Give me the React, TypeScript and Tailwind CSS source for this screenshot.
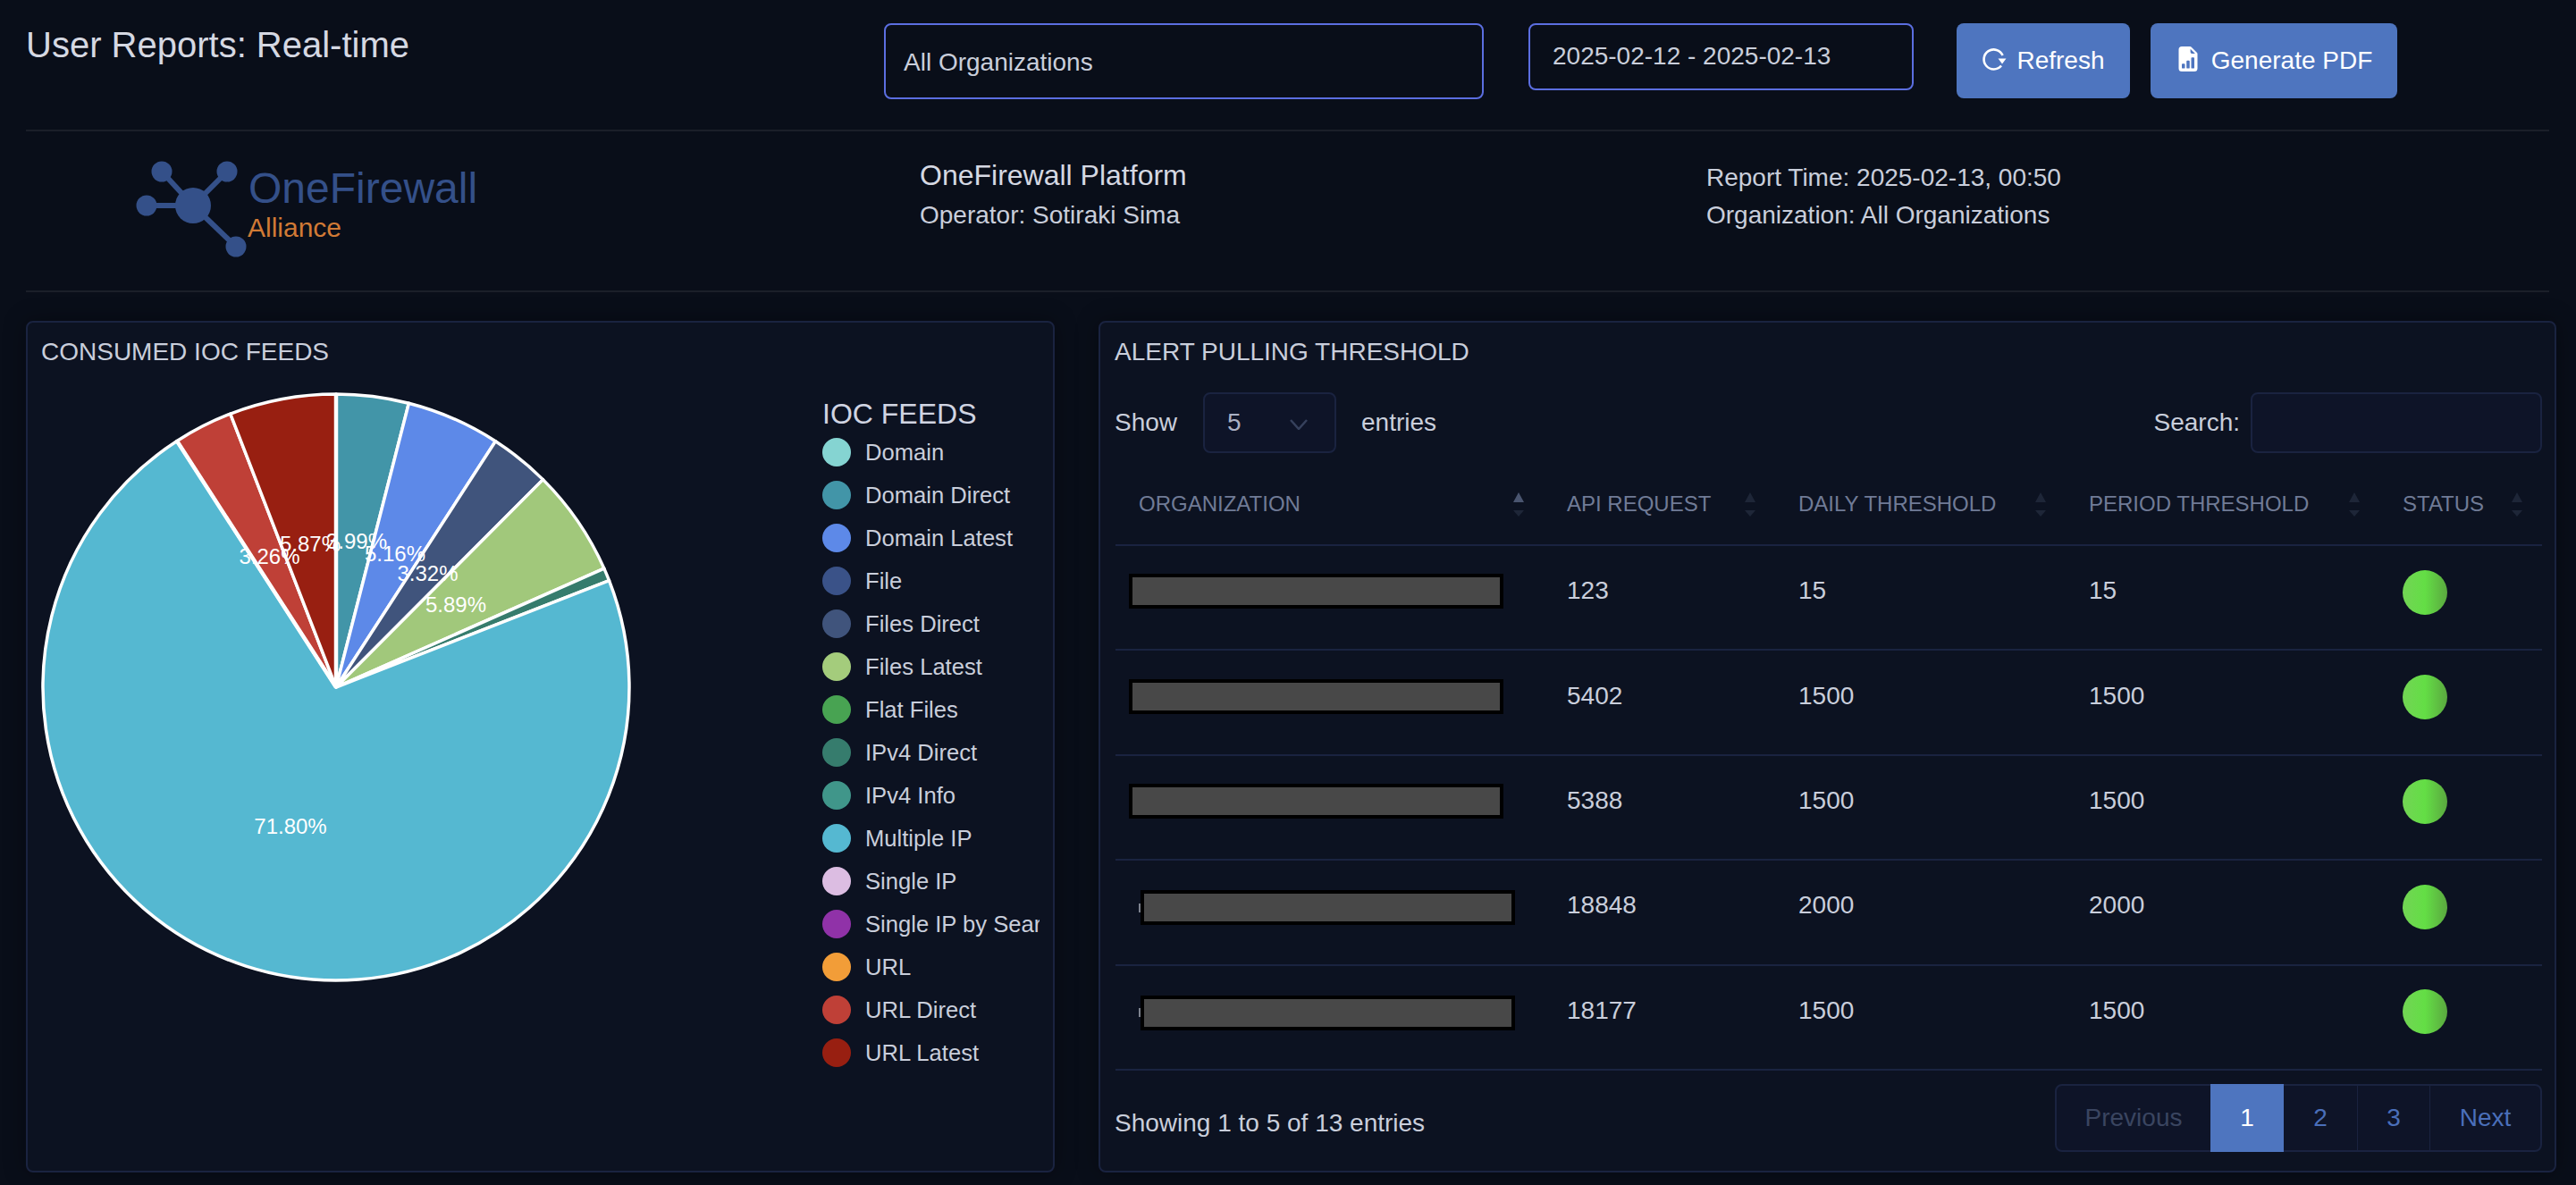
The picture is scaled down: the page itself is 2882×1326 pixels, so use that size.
import React from "react";
import { BsFileEarmarkBarGraphFill } from "react-icons/bs";

const slices = [
  { p: 3.99, c: "#4295a8" },
  { p: 5.16, c: "#5d89e8" },
  { p: 3.32, c: "#40547c" },
  { p: 5.89, c: "#a1c87b" },
  { p: 0.71, c: "#367c6d" },
  { p: 71.8, c: "#55b8d1" },
  { p: 3.26, c: "#bf4037" },
  { p: 5.87, c: "#981f11" },
];
const labels = [
  { t: "5.87%", x: 301, y: 169 },
  { t: "3.99%", x: 353, y: 166 },
  { t: "3.26%", x: 255.5, y: 183 },
  { t: "5.16%", x: 396, y: 180 },
  { t: "3.32%", x: 432.5, y: 202 },
  { t: "5.89%", x: 464, y: 237 },
  { t: "71.80%", x: 279, y: 485 },
];
const legend = [
  ["Domain", "#85d4d2"],
  ["Domain Direct", "#4295a8"],
  ["Domain Latest", "#5d89e8"],
  ["File", "#3a5288"],
  ["Files Direct", "#40547c"],
  ["Files Latest", "#a4cc7c"],
  ["Flat Files", "#48a352"],
  ["IPv4 Direct", "#367c6d"],
  ["IPv4 Info", "#40968a"],
  ["Multiple IP", "#55b8d1"],
  ["Single IP", "#dcbde2"],
  ["Single IP by Search", "#9032a8"],
  ["URL", "#f29d38"],
  ["URL Direct", "#bf4037"],
  ["URL Latest", "#981f11"],
];
const rows = [
  { v: ["123", "15", "15"], shift: false },
  { v: ["5402", "1500", "1500"], shift: false },
  { v: ["5388", "1500", "1500"], shift: false },
  { v: ["18848", "2000", "2000"], shift: true },
  { v: ["18177", "1500", "1500"], shift: true },
];

function Pie() {
  const cx = 330, cy = 330, r = 328;
  let a = 0;
  const pt = (d: number) => {
    const t = (d / 100) * 2 * Math.PI;
    return [cx + r * Math.sin(t), cy - r * Math.cos(t)];
  };
  return (
    <svg width="660" height="660" viewBox="0 0 660 660" className="shrink-0 block">
      {slices.map((s, i) => {
        const [x1, y1] = pt(a);
        a += s.p;
        const [x2, y2] = pt(a);
        const large = s.p > 50 ? 1 : 0;
        return (
          <path
            key={i}
            d={`M${cx} ${cy}L${x1} ${y1}A${r} ${r} 0 ${large} 1 ${x2} ${y2}Z`}
            fill={s.c}
            stroke="#fff"
            strokeWidth="3.5"
            strokeLinejoin="round"
          />
        );
      })}
      {[0, 90.87].map((d, i) => {
        const [x, y] = pt(d);
        return <line key={i} x1={cx} y1={cy} x2={x} y2={y} stroke="#fff" strokeWidth="4.5" />;
      })}
      {labels.map((l) => (
        <text
          key={l.t}
          x={l.x}
          y={l.y}
          fill="#fff"
          fontSize="24"
          textAnchor="middle"
          dominantBaseline="central"
          fontFamily="'Liberation Sans', sans-serif"
        >
          {l.t}
        </text>
      ))}
    </svg>
  );
}

function Logo() {
  return (
    <svg width="400" height="130" viewBox="0 0 400 130" className="block">
      <g fill="#345089" stroke="#345089">
        <g strokeWidth="6">
          <line x1="65" y1="65" x2="30" y2="27" />
          <line x1="65" y1="65" x2="103" y2="27" />
          <line x1="65" y1="65" x2="13" y2="65" />
          <line x1="65" y1="65" x2="113" y2="111" />
        </g>
        <g stroke="none">
          <circle cx="65" cy="65" r="20" />
          <circle cx="30" cy="27" r="11.5" />
          <circle cx="103" cy="27" r="11.5" />
          <circle cx="13" cy="65" r="11.5" />
          <circle cx="113" cy="111" r="11.5" />
        </g>
      </g>
      <text x="127" y="62" fill="#345089" fontSize="48" fontFamily="'Liberation Sans', sans-serif">OneFirewall</text>
      <text x="126" y="100" fill="#d17a35" fontSize="30" fontFamily="'Liberation Sans', sans-serif">Alliance</text>
    </svg>
  );
}

function Sort({ active }: { active?: boolean }) {
  return (
    <span className="absolute right-[22px] top-[43px] flex flex-col items-center gap-[9px]">
      <span className={`w-0 h-0 border-x-[6px] border-x-transparent border-b-[11px] ${active ? "border-b-[#4a5570]" : "border-b-[#1e2638]"}`} />
      <span className="w-0 h-0 border-x-[6px] border-x-transparent border-t-[7px] border-t-[#1e2638]" />
    </span>
  );
}

const headers = [
  { t: "ORGANIZATION", w: "w-[479px]", active: true },
  { t: "API REQUEST", w: "w-[259px]" },
  { t: "DAILY THRESHOLD", w: "w-[325px]" },
  { t: "PERIOD THRESHOLD", w: "w-[351px]" },
  { t: "STATUS", w: "w-[182px]" },
];

export default function App() {
  return (
    <div className="w-[2882px] h-[1326px] overflow-hidden bg-[#090e19] pl-[29px] pr-[22px] text-[#c9cedb] text-[28px] font-['Liberation_Sans',sans-serif]">
      <header className="h-[147px] flex items-start pt-[26px] border-b-2 border-[#1b1f29] mr-[8px]">
        <h1 className="w-[960px] text-[40px] leading-[50px] font-normal text-[#d5d8e2] mt-[-1px]">User Reports: Real-time</h1>
        <div className="w-[671px] h-[85px] border-2 border-[#5b6ee0] rounded-lg flex items-center pl-[20px] pt-[2px]">All Organizations</div>
        <div className="w-[431px] h-[75px] ml-[50px] border-2 border-[#5b6ee0] rounded-lg flex items-center pl-[25px] pb-[2px]">2025-02-12 - 2025-02-13</div>
        <button className="w-[194px] h-[84px] ml-[48px] rounded-lg bg-[#4e75bf] text-white flex items-center justify-center gap-[11px]">
          <svg width="28" height="28" viewBox="0 0 28 28" fill="none" stroke="#fff" strokeWidth="2.6" className="mb-[4px] shrink-0">
            <path d="M23.6 10A11 11 0 1 0 22 21.5" />
            <path d="M18.5 13.5H27.5L23 19.5Z" fill="#fff" stroke="none" />
          </svg>
          Refresh
        </button>
        <button className="w-[276px] h-[84px] ml-[23px] rounded-lg bg-[#4e75bf] text-white flex items-center justify-center gap-[12px]">
          <BsFileEarmarkBarGraphFill className="w-[28px] h-[28px] mb-[4px] shrink-0" />
          Generate PDF
        </button>
      </header>

      <section className="h-[180px] flex border-b-2 border-[#1b1f29] mr-[8px]">
        <div className="w-[1000px] pl-[122px] pt-[18px]">
          <Logo />
        </div>
        <div className="w-[880px] pt-[26px]">
          <div className="text-[32px] leading-[47px] text-[#d5d8e2]">OneFirewall Platform</div>
          <div className="leading-[40px] mt-px">Operator: Sotiraki Sima</div>
        </div>
        <div className="pt-[31px]">
          <div className="leading-[42px]">Report Time: 2025-02-13, 00:50</div>
          <div className="leading-[42px]">Organization: All Organizations</div>
        </div>
      </section>

      <main className="flex gap-[49px] mt-[32px] h-[953px]">
        <section className="w-[1151px] shrink-0 border-2 border-[#1a2340] rounded-lg bg-[#0c1221] pl-[15px] pt-[17px] shadow-[0_0_24px_rgba(0,0,0,0.35)]">
          <h2 className="leading-[32px] font-normal">CONSUMED IOC FEEDS</h2>
          <div className="flex mt-[29px]">
            <Pie />
            <div className="ml-[214px] w-[243px] overflow-hidden whitespace-nowrap mt-[6px]">
              <div className="text-[32px] leading-[36px] text-[#d0d4e2]">IOC FEEDS</div>
              <div className="flex flex-col gap-[16px] mt-[9px]">
                {legend.map(([n, c]) => (
                  <div key={n} className="flex items-center gap-[16px] h-[32px] text-[25.6px]">
                    <span className="w-[32px] h-[32px] rounded-full shrink-0" style={{ background: c }} />
                    {n}
                  </div>
                ))}
              </div>
            </div>
          </div>
        </section>

        <section className="w-[1631px] shrink-0 border-2 border-[#1a2340] rounded-lg bg-[#0c1221] pl-[16px] pr-[14px] pt-[17px] shadow-[0_0_24px_rgba(0,0,0,0.35)]">
          <h2 className="leading-[32px] font-normal">ALERT PULLING THRESHOLD</h2>
          <div className="flex items-center mt-[29px] h-[68px]">
            <span>Show</span>
            <div className="w-[149px] h-[68px] ml-[29px] border-2 border-[#1a2340] rounded-lg bg-[#0e1428] flex items-center pl-[25px] text-[#aab1c4] relative">
              5
              <svg width="20" height="12" viewBox="0 0 20 12" fill="none" stroke="#36415c" strokeWidth="2.5" className="absolute left-[95px] top-[28px]">
                <path d="M1 1L10 11L19 1" />
              </svg>
            </div>
            <span className="ml-[28px]">entries</span>
            <span className="ml-auto">Search:</span>
            <div className="w-[326px] h-[68px] ml-[12px] border-2 border-[#1a2340] rounded-lg bg-[#0e1428]" />
          </div>
          <table className="w-[1596px] table-fixed border-collapse mt-px ml-px">
            <thead>
              <tr className="border-b-2 border-[#1a2340] h-[102px]">
                {headers.map((h, i) => (
                  <th key={h.t} className={`${h.w} relative p-0 pl-[26px] text-left font-normal text-[24px] text-[#707b96] pt-[10px]`}>
                    {h.t}
                    <Sort active={i === 0} />
                  </th>
                ))}
              </tr>
            </thead>
            <tbody>
              {rows.map((r, i) => (
                <tr key={i} className="border-b-2 border-[#1a2340] h-[117.4px]">
                  <td className="p-0">
                    {r.shift ? (
                      <div className="flex items-center ml-[26px] mt-[-10px]">
                        <span className="w-[2px] h-[10px] bg-[#7d828e] shrink-0" />
                        <div className="h-[39px] w-[419px] bg-[#484848] border-4 border-black" />
                      </div>
                    ) : (
                      <div className="h-[39px] w-[419px] bg-[#484848] border-4 border-black ml-[15px] mt-[-14px]" />
                    )}
                  </td>
                  {r.v.map((v, j) => (
                    <td key={j} className="p-0 pl-[26px] pb-[15px]">{v}</td>
                  ))}
                  <td className="p-0 pl-[26px] pb-[12px]">
                    <div className="w-[50px] h-[50px] rounded-full bg-linear-to-r from-[#72d454] via-[#63de45] to-[#5aa83f]" />
                  </td>
                </tr>
              ))}
            </tbody>
          </table>
          <div className="flex items-start mt-[15px]">
            <span className="mt-[23px]">Showing 1 to 5 of 13 entries</span>
            <nav className="ml-auto flex h-[76px] w-[545px] border-2 border-[#1a2340] rounded-lg bg-[#0e1428] overflow-visible">
              <span className="w-[172px] flex items-center justify-center text-[#3a4560]">Previous</span>
              <span className="w-[82px] flex items-center justify-center bg-[#4e75bf] text-white -my-[2px]">1</span>
              <span className="w-[83px] flex items-center justify-center text-[#4a6fba] border-r border-[#1a2340]">2</span>
              <span className="w-[81px] flex items-center justify-center text-[#4a6fba] border-r border-[#1a2340]">3</span>
              <span className="flex-1 flex items-center justify-center text-[#4a6fba]">Next</span>
            </nav>
          </div>
        </section>
      </main>
    </div>
  );
}
